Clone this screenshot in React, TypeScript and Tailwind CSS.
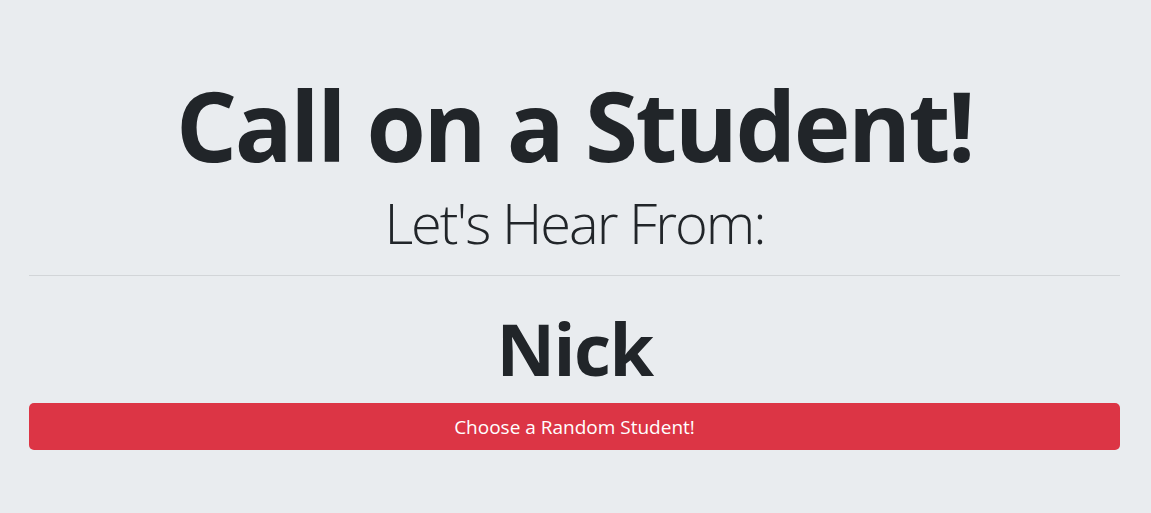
export default function App() {
  return (
    <div className="min-h-[513px] w-full bg-[#e9ecef] text-[#212529]" style={{ fontFamily: '"Open Sans", "Noto Sans", sans-serif' }}>
      <div className="pl-[29px] pr-[31px] pt-[77px] text-center">
        <h1 className="text-[96px] font-bold leading-none tracking-[-2.4px]">Call on a Student!</h1>
        <p className="mt-[21px] text-[56px] font-light leading-none tracking-[-2px]">Let's Hear From:</p>
        <hr className="mt-[25px] border-t border-[#d2d5d8]" />
        <h2 className="mt-[29px] text-[72px] font-bold leading-[1.2] tracking-[-1.5px]">Nick</h2>
        <button className="mt-[12px] h-[47px] w-full rounded-[5px] bg-[#dc3545] text-[19px] leading-[1.5] text-white">
          Choose a Random Student!
        </button>
      </div>
    </div>
  );
}
